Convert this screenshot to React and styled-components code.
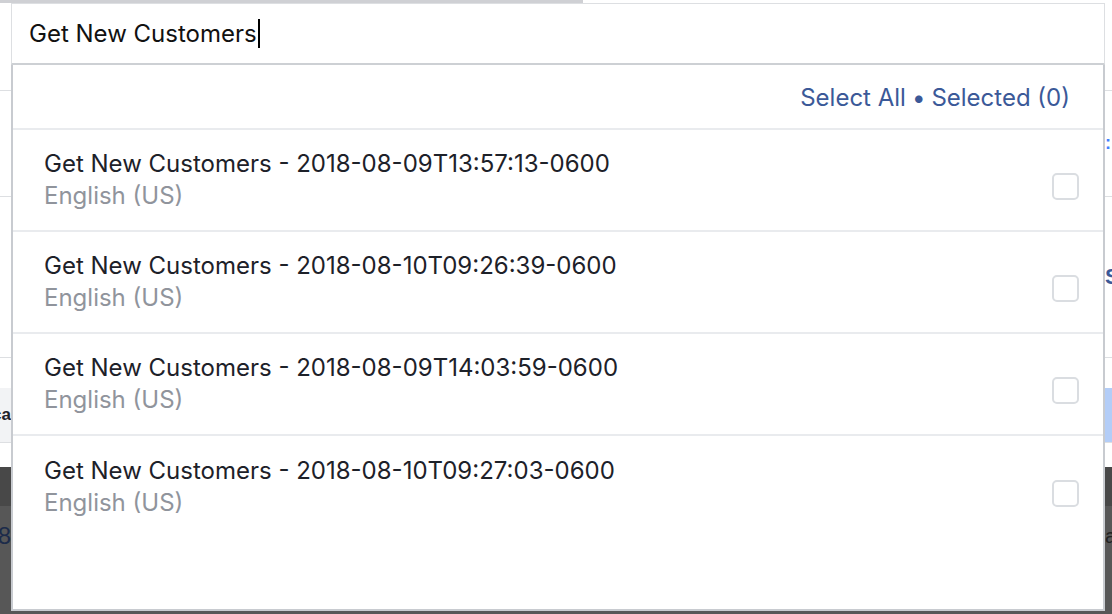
import React from "react";
import styled, { createGlobalStyle } from "styled-components";

const GlobalStyle = createGlobalStyle`
  html, body { margin: 0; padding: 0; background: #ffffff; }
  body { font-family: Inter, "Noto Sans", "Liberation Sans", sans-serif; }
  * { box-sizing: border-box; }
`;

const Page = styled.div`
  position: relative;
  width: 1112px;
  height: 614px;
  overflow: hidden;
  background: #ffffff;
`;

/* ---------- underlying page (mostly hidden behind the popup) ---------- */
const Underlay = styled.div`
  display: flex;
  flex-direction: column;
  height: 100%;
`;

const TopStrip = styled.div`
  height: 3px;
  display: flex;
  flex-shrink: 0;
`;

const StripSeg = styled.div`
  width: ${(p) => p.$w}px;
  background: ${(p) => p.$bg};
`;

const BgRow = styled.div`
  flex-shrink: 0;
  height: ${(p) => p.$h}px;
  display: flex;
  justify-content: space-between;
  align-items: center;
  border-bottom: ${(p) => (p.$line ? "1px solid #dddfe2" : "none")};
`;

const LeftEdge = styled.div`
  width: 11px;
  height: 100%;
  display: flex;
  align-items: center;
  justify-content: flex-end;
  overflow: hidden;
  background: ${(p) => p.$bg || "transparent"};
  color: ${(p) => p.$color || "#1d2129"};
  font-family: "Liberation Sans", Arial, sans-serif;
  font-size: ${(p) => p.$size || 16}px;
  font-weight: ${(p) => p.$weight || 400};
  span { flex-shrink: 0; white-space: nowrap; }
`;

const RightEdge = styled.div`
  width: 7px;
  height: 100%;
  display: flex;
  align-items: center;
  justify-content: flex-start;
  overflow: hidden;
  background: ${(p) => p.$bg || "transparent"};
  color: ${(p) => p.$color || "#1d2129"};
  font-family: "Liberation Sans", Arial, sans-serif;
  font-size: ${(p) => p.$size || 16}px;
  font-weight: ${(p) => p.$weight || 400};
  span { flex-shrink: 0; white-space: nowrap; }
`;

const Footer = styled.div`
  flex: 1;
  display: flex;
  flex-direction: column;
  background: #575757;
`;

const FooterTop = styled.div`
  height: 39px;
  background: #484848;
`;

/* ---------- popup ---------- */
const Popup = styled.div`
  position: absolute;
  left: 11px;
  top: 3px;
  width: 1094px;
  display: flex;
  flex-direction: column;
`;

const SearchBox = styled.div`
  height: 62px;
  display: flex;
  align-items: center;
  padding-left: 17px;
  background: #ffffff;
  border: 1px solid #dddfe2;
  border-bottom: 2px solid #cdd0d4;
  font-size: 24px;
  color: #111111;
`;

const Caret = styled.span`
  display: inline-block;
  width: 2px;
  height: 29px;
  margin-left: 1px;
  background: #000000;
`;

const Dropdown = styled.div`
  height: 546px;
  display: flex;
  flex-direction: column;
  background: #ffffff;
  border: 2px solid #c8cbd0;
  border-top: none;
`;

const DropHeader = styled.div`
  height: 65px;
  flex-shrink: 0;
  display: flex;
  align-items: center;
  justify-content: flex-end;
  padding: 3px 33px 0 0;
  border-bottom: 2px solid #e9ebee;
  font-size: 24px;
  line-height: 32px;
  color: #3b5998;
`;

const HeaderLink = styled.span`
  cursor: pointer;
`;

const Dot = styled.span`
  margin: 0 6px;
`;

const Row = styled.div`
  height: 102px;
  flex-shrink: 0;
  display: flex;
  align-items: center;
  justify-content: space-between;
  padding: 0 24px 0 31px;
  border-bottom: ${(p) => (p.$last ? "none" : "2px solid #e9ebee")};
`;

const RowText = styled.div`
  display: flex;
  flex-direction: column;
  font-size: 24px;
  line-height: 32px;
`;

const Title = styled.div`
  color: #1d2129;
`;

const Sub = styled.div`
  color: #90949c;
`;

const Check = styled.div`
  width: 27px;
  height: 27px;
  margin-top: 12px;
  border: 2px solid #dadde1;
  border-radius: 5px;
  background: #ffffff;
`;

const items = [
  "Get New Customers - 2018-08-09T13:57:13-0600",
  "Get New Customers - 2018-08-10T09:26:39-0600",
  "Get New Customers - 2018-08-09T14:03:59-0600",
  "Get New Customers - 2018-08-10T09:27:03-0600",
];

export default function App() {
  return (
    <>
      <GlobalStyle />
      <Page>
        <Underlay>
          <TopStrip>
            <StripSeg $w={583} $bg="#cfd0d4" />
          </TopStrip>
          <BgRow $h={88} $line />
          <BgRow $h={106} $line>
            <LeftEdge />
            <RightEdge $color="#4080ff" $size={18} $weight={700}>
              <span>:</span>
            </RightEdge>
          </BgRow>
          <BgRow $h={161} $line>
            <LeftEdge />
            <RightEdge $color="#3b5998" $size={22} $weight={700}>
              <span>Se</span>
            </RightEdge>
          </BgRow>
          <BgRow $h={30} />
          <BgRow $h={55} $line>
            <LeftEdge $bg="#f2f3f5" $size={17} $weight={700}>
              <span>ca</span>
            </LeftEdge>
            <RightEdge $bg="#b3cdf7" />
          </BgRow>
          <BgRow $h={24} />
          <Footer>
            <FooterTop />
            <BgRow $h={60}>
              <LeftEdge $color="#1c2b4a" $size={24}>
                <span>08</span>
              </LeftEdge>
              <RightEdge $color="#222222" $size={20}>
                <span>a</span>
              </RightEdge>
            </BgRow>
          </Footer>
        </Underlay>

        <Popup>
          <SearchBox>
            Get New Customers
            <Caret />
          </SearchBox>
          <Dropdown>
            <DropHeader>
              <HeaderLink>Select All</HeaderLink>
              <Dot>•</Dot>
              <HeaderLink>Selected (0)</HeaderLink>
            </DropHeader>
            {items.map((t, i) => (
              <Row key={t} $last={i === items.length - 1}>
                <RowText>
                  <Title>{t}</Title>
                  <Sub>English (US)</Sub>
                </RowText>
                <Check />
              </Row>
            ))}
          </Dropdown>
        </Popup>
      </Page>
    </>
  );
}
